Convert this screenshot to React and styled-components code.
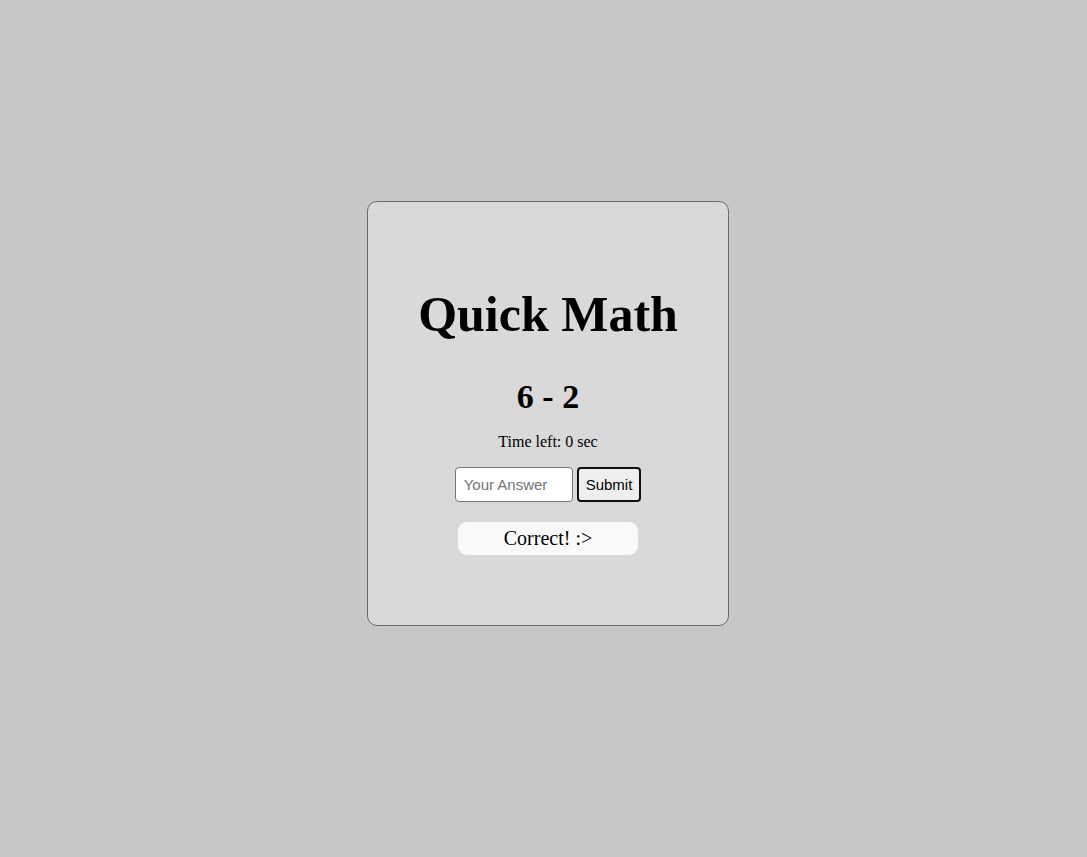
import React from "react";
import styled, { createGlobalStyle } from "styled-components";

const GlobalStyle = createGlobalStyle`
  html, body {
    margin: 0;
    padding: 0;
    background: #c7c7c7;
  }
  body {
    font-family: "Liberation Serif", "Times New Roman", serif;
    color: #000;
  }
`;

const Page = styled.div`
  min-height: 857px;
  box-sizing: border-box;
  display: flex;
  justify-content: center;
  align-items: flex-start;
  padding: 201px 0 0 9px;
`;

const Card = styled.div`
  box-sizing: border-box;
  width: 362px;
  height: 425px;
  background: #d9d9d9;
  border: 1px solid #6b6b6b;
  border-radius: 10px;
  padding-top: 83px;
  display: flex;
  flex-direction: column;
  align-items: center;
`;

const Title = styled.h1`
  margin: 0;
  font-size: 50px;
  font-weight: bold;
`;

const Problem = styled.h2`
  margin: 35px 0 0;
  font-size: 34px;
  font-weight: bold;
`;

const Timer = styled.p`
  margin: 17px 0 0;
  font-size: 16px;
`;

const Form = styled.form`
  margin-top: 16px;
  display: flex;
  gap: 4px;
`;

const AnswerInput = styled.input`
  box-sizing: border-box;
  width: 118px;
  height: 35px;
  padding: 0 8px;
  border: 1px solid #767676;
  border-radius: 4px;
  background: #fff;
  font-family: "Liberation Sans", Arial, sans-serif;
  font-size: 15px;
  color: #000;
  outline: none;
  &::placeholder {
    color: #757575;
  }
`;

const SubmitButton = styled.button`
  box-sizing: border-box;
  height: 35px;
  padding: 0 7px;
  border: 2px solid #101010;
  border-radius: 4px;
  background: #efefef;
  font-family: "Liberation Sans", Arial, sans-serif;
  font-size: 15px;
  color: #000;
`;

const Result = styled.div`
  margin-top: 20px;
  width: 180px;
  height: 33px;
  line-height: 33px;
  border-radius: 9px;
  background: #f9f9f9;
  text-align: center;
  font-size: 20px;
`;

export default function App() {
  return (
    <>
      <GlobalStyle />
      <Page>
        <Card>
          <Title>Quick Math</Title>
          <Problem>6 - 2</Problem>
          <Timer>Time left: 0 sec</Timer>
          <Form onSubmit={(e) => e.preventDefault()}>
            <AnswerInput type="text" placeholder="Your Answer" />
            <SubmitButton type="submit">Submit</SubmitButton>
          </Form>
          <Result>Correct! :&gt;</Result>
        </Card>
      </Page>
    </>
  );
}
